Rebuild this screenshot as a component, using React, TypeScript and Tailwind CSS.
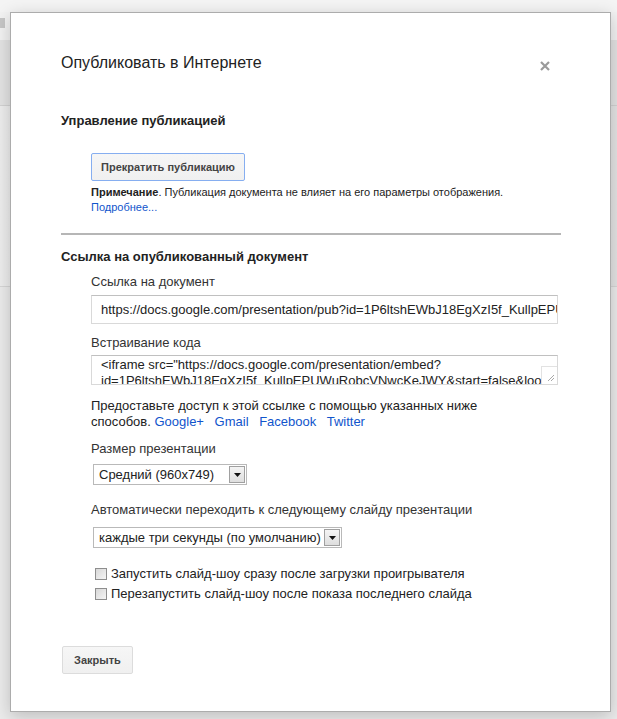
import React from "react";

function SelectBox({ value, width }: { value: string; width: string }) {
  return (
    <div className={`relative flex h-[21px] items-center border border-[#b9b9b9] bg-white pl-[5px] ${width}`}>
      <span className="whitespace-nowrap text-[13px] leading-[16px] text-[#222]">{value}</span>
      <div className="absolute right-[1px] top-[1px] flex h-[17px] w-[16px] items-center justify-center border border-[#a0a0a0] bg-gradient-to-b from-[#f4f4f4] to-[#dedede]">
        <svg width="7" height="4" viewBox="0 0 7 4">
          <path d="M0 0H7L3.5 4Z" fill="#111" />
        </svg>
      </div>
    </div>
  );
}

function Checkbox({ label }: { label: string }) {
  return (
    <div className="ml-[4px] flex h-[16px] items-start">
      <div className="mt-[2px] h-[12px] w-[12px] border border-[#8e8e8e] bg-gradient-to-br from-[#d8d8d8] to-[#f5f5f5]" />
      <span className="ml-[4px] whitespace-nowrap text-[13px] leading-[16px] text-[#222]">{label}</span>
    </div>
  );
}

export default function App() {
  return (
    <div className="relative h-[719px] w-[617px] overflow-hidden bg-[#ebebeb] font-['Liberation_Sans',Arial,sans-serif]">
      {/* underlying page */}
      <div className="flex flex-col">
        <div className="h-[12px] bg-[#f4f4f4]" />
        <div className="flex h-[28px] bg-[#f2f2f2]">
          <div className="mt-[6px] h-[10px] w-[5px] bg-[#c6c6c6]" />
        </div>
        <div className="h-[65px] bg-[#e3e3e3]" />
        <div className="h-px bg-[#d2d2d2]" />
        <div className="h-[180px] bg-gradient-to-r from-[#ededed] to-[#e4e4e4]" />
        <div className="h-px bg-[#d6d6d6]" />
      </div>

      {/* dialog */}
      <div className="absolute left-[10px] top-[12px] h-[700px] w-[601px] border border-[#acacac] bg-white shadow-[0_4px_16px_rgba(0,0,0,0.2)]">
        <div className="flex flex-col pl-[50px] pr-[49px] pt-[40px] text-[#222]">
          <div className="flex items-start justify-between">
            <div className="text-[16px] leading-[20px] text-[#222]">Опубликовать в Интернете</div>
            <svg className="mr-[11px] mt-[8px]" width="10" height="10" viewBox="0 0 10 10">
              <path d="M1 1L9 9M9 1L1 9" stroke="#9a9a9a" strokeWidth="2.2" />
            </svg>
          </div>

          <div className="mt-[40px] text-[13px] font-bold leading-[16px]">Управление публикацией</div>

          <div className="ml-[30px] mt-[24px] flex flex-col items-start">
            <button className="h-[28px] rounded-[2px] border border-[#86aef0] bg-gradient-to-b from-[#f6f6f6] to-[#f0f0f0] px-[9px] text-[11px] font-bold leading-[15px] text-[#444]">
              Прекратить публикацию
            </button>
            <div className="mt-[4px] text-[11px] leading-[15px] text-[#222]">
              <div>
                <span className="font-bold">Примечание</span>. Публикация документа не влияет на его параметры отображения.
              </div>
              <div className="text-[#1155cc]">Подробнее...</div>
            </div>
          </div>

          <div className="mt-[18px] h-[2px] bg-[#b6b6b6]" />

          <div className="mt-[14px] text-[13px] font-bold leading-[16px]">Ссылка на опубликованный документ</div>

          <div className="ml-[30px] mr-[3px] flex flex-col text-[13px] leading-[16px]">
            <div className="mt-[9px] text-[#333]">Ссылка на документ</div>
            <div className="mt-[5px] flex h-[29px] items-center overflow-hidden border border-[#d9d9d9] border-t-[#c0c0c0] pl-[9px]">
              <span className="whitespace-nowrap text-[#222]">
                https://docs.google.com/presentation/pub?id=1P6ltshEWbJ18EgXzI5f_KullpEPUWuRobcVNwcKeJWY&amp;start=false
              </span>
            </div>

            <div className="mt-[11px] text-[#333]">Встраивание кода</div>
            <div className="relative mt-[4px] h-[30px] overflow-hidden border border-[#d9d9d9] border-t-[#c0c0c0] pl-[9px] pr-[20px] pt-[1px] leading-[16px] text-[#222]">
              <div className="whitespace-nowrap">&lt;iframe src="https://docs.google.com/presentation/embed?</div>
              <div className="whitespace-nowrap">id=1P6ltshEWbJ18EgXzI5f_KullpEPUWuRobcVNwcKeJWY&amp;start=false&amp;loop=false</div>
              <div className="absolute bottom-0 right-0 flex h-[18px] w-[16px] items-end justify-end border-l border-t border-[#e2e2e2] bg-white p-[2px]">
                <svg width="8" height="8" viewBox="0 0 8 8">
                  <path d="M7 1L1 7M7 4L4 7" stroke="#a8a8a8" strokeWidth="1" />
                </svg>
              </div>
            </div>

            <div className="mt-[13px] text-[#222]">
              Предоставьте доступ к этой ссылке с помощью указанных ниже
              <br />
              способов. <span className="mr-[7px] text-[#1155cc]">Google+</span>{" "}
              <span className="mr-[7px] text-[#1155cc]">Gmail</span>{" "}
              <span className="mr-[7px] text-[#1155cc]">Facebook</span>{" "}
              <span className="text-[#1155cc]">Twitter</span>
            </div>

            <div className="mt-[11px] text-[#333]">Размер презентации</div>
            <div className="ml-[2px] mt-[7px]">
              <SelectBox value="Средний (960x749)" width="w-[154px]" />
            </div>

            <div className="mt-[17px] text-[#333]">Автоматически переходить к следующему слайду презентации</div>
            <div className="ml-[2px] mt-[9px]">
              <SelectBox value="каждые три секунды (по умолчанию)" width="w-[249px]" />
            </div>

            <div className="mt-[18px] flex flex-col gap-[4px]">
              <Checkbox label="Запустить слайд-шоу сразу после загрузки проигрывателя" />
              <Checkbox label="Перезапустить слайд-шоу после показа последнего слайда" />
            </div>
          </div>

          <div className="ml-px mt-[44px]">
            <button className="h-[28px] w-[71px] rounded-[2px] border border-[#dcdcdc] bg-gradient-to-b from-[#f6f6f6] to-[#f0f0f0] text-[11px] font-bold leading-[15px] text-[#444]">
              Закрыть
            </button>
          </div>
        </div>
      </div>
    </div>
  );
}
